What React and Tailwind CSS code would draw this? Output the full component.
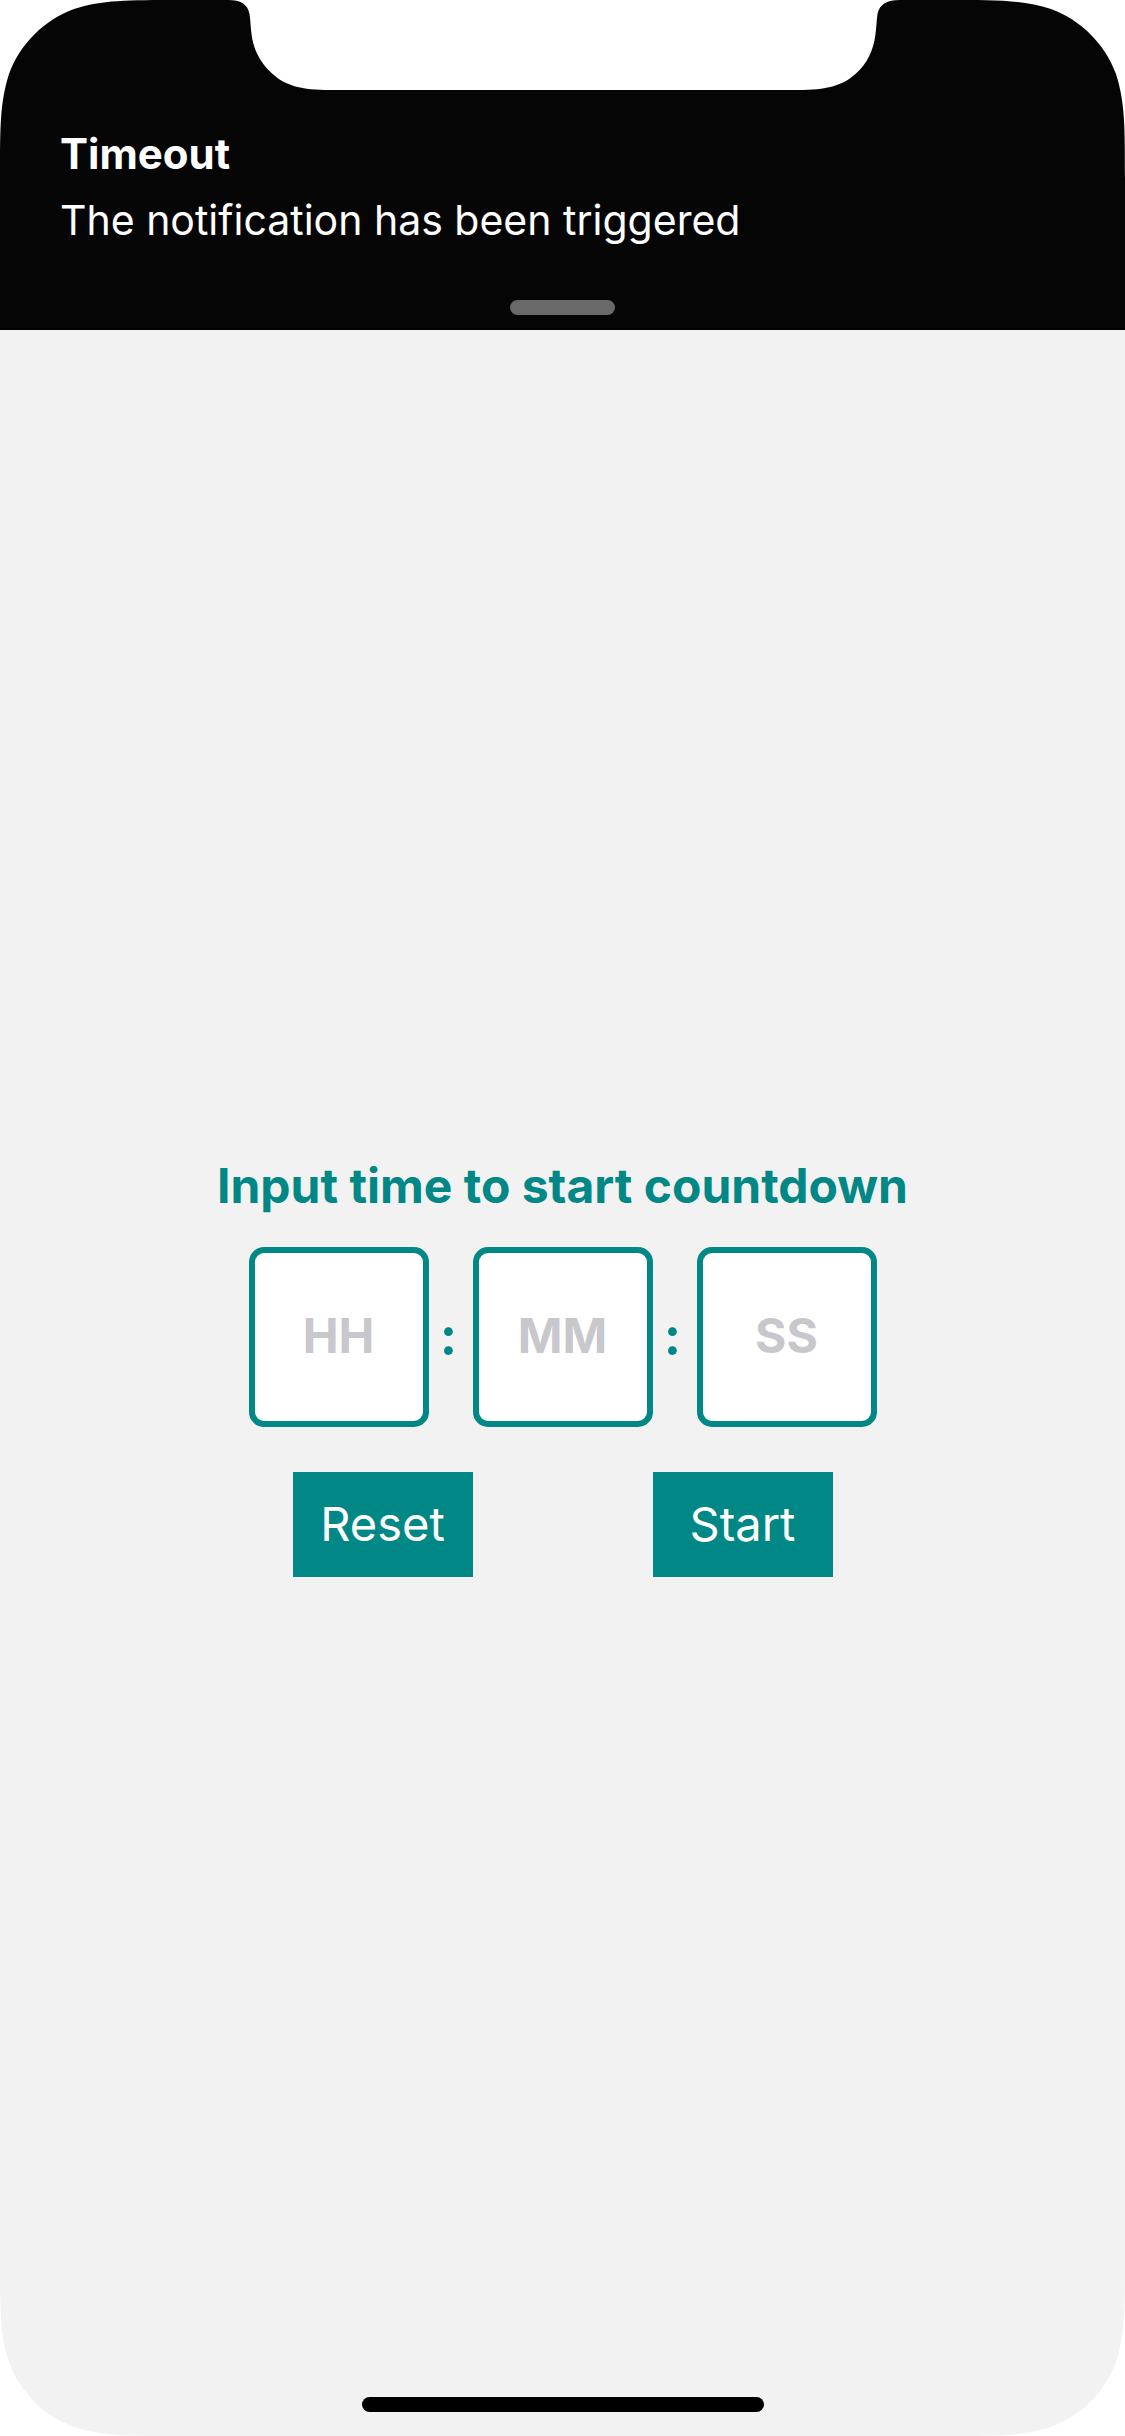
import { Fragment } from "react";

const FIELDS = [
  { id: "hours", label: "Hours", placeholder: "HH" },
  { id: "minutes", label: "Minutes", placeholder: "MM" },
  { id: "seconds", label: "Seconds", placeholder: "SS" },
];

// White continuous-curve corner laid over the edge of the screen
function Corner({ className }) {
  return (
    <svg
      aria-hidden="true"
      viewBox="0 0 180 180"
      className={`pointer-events-none absolute size-[180px] fill-white ${className}`}
    >
      <path d="M0 0H179C127 0 102 0 74 9C44 20 20 44 9 74C0 102 0 127 0 179Z" />
    </svg>
  );
}

function Notch() {
  return (
    <svg
      aria-hidden="true"
      viewBox="226 0 673 90"
      className="pointer-events-none absolute top-0 left-1/2 h-[90px] w-[673px] -translate-x-1/2 fill-white"
    >
      <path d="M228 0C240 0 247 4 249 14C250 20 250 27 251 34C253 51 261 64 271 73C285 86 301 90 330 90H797C826 90 842 86 856 73C866 64 873 51 875 34C876 27 876 20 877 14C879 4 887 0 899 0Z" />
    </svg>
  );
}

function Notification({ title, message }) {
  return (
    <header
      role="alert"
      className="flex flex-col border-b-2 border-black bg-[#050505] px-[60px] pt-[121px] pb-[13px] text-white"
    >
      <h2 className="text-[42px] leading-[66px] font-bold">{title}</h2>
      <p className="text-[41px] leading-[66px]">{message}</p>
      <div className="mx-auto mt-[47px] h-[15px] w-[105px] rounded-full bg-[#696969]" />
    </header>
  );
}

function ActionButton({ children }) {
  return (
    <button type="button" className="h-[105px] w-[180px] bg-[#008786] text-[47px] text-white">
      {children}
    </button>
  );
}

export default function App() {
  return (
    <div className="relative flex min-h-screen flex-col overflow-hidden bg-[#f2f2f2] font-['Inter',sans-serif]">
      <Notification title="Timeout" message="The notification has been triggered" />

      <main className="flex flex-1 flex-col items-center justify-center">
        <h1 className="text-[48px] leading-[72px] font-bold text-[#008786]">
          Input time to start countdown
        </h1>
        <form className="mt-[25px] flex flex-col items-center gap-[45px]">
          <div className="flex items-center">
            {FIELDS.map((field, i) => (
              <Fragment key={field.id}>
                {i > 0 && (
                  <span className="w-11 pr-1 text-center text-[52px] font-bold text-[#008786]">:</span>
                )}
                <input
                  id={field.id}
                  aria-label={field.label}
                  type="text"
                  inputMode="numeric"
                  maxLength={2}
                  placeholder={field.placeholder}
                  className="size-[180px] rounded-[15px] border-6 border-[#008786] bg-white pb-1 text-center text-[48px] font-bold text-[#008786] outline-none placeholder:text-[#c7c7cc]"
                />
              </Fragment>
            ))}
          </div>
          <div className="flex gap-[180px]">
            <ActionButton>Reset</ActionButton>
            <ActionButton>Start</ActionButton>
          </div>
        </form>
      </main>

      <footer className="flex justify-center pb-6">
        <div className="h-[15px] w-[402px] rounded-full bg-black" />
      </footer>

      <Notch />
      <Corner className="top-0 left-0" />
      <Corner className="top-0 right-0 rotate-90" />
      <Corner className="right-0 bottom-0 rotate-180" />
      <Corner className="bottom-0 left-0 -rotate-90" />
    </div>
  );
}
